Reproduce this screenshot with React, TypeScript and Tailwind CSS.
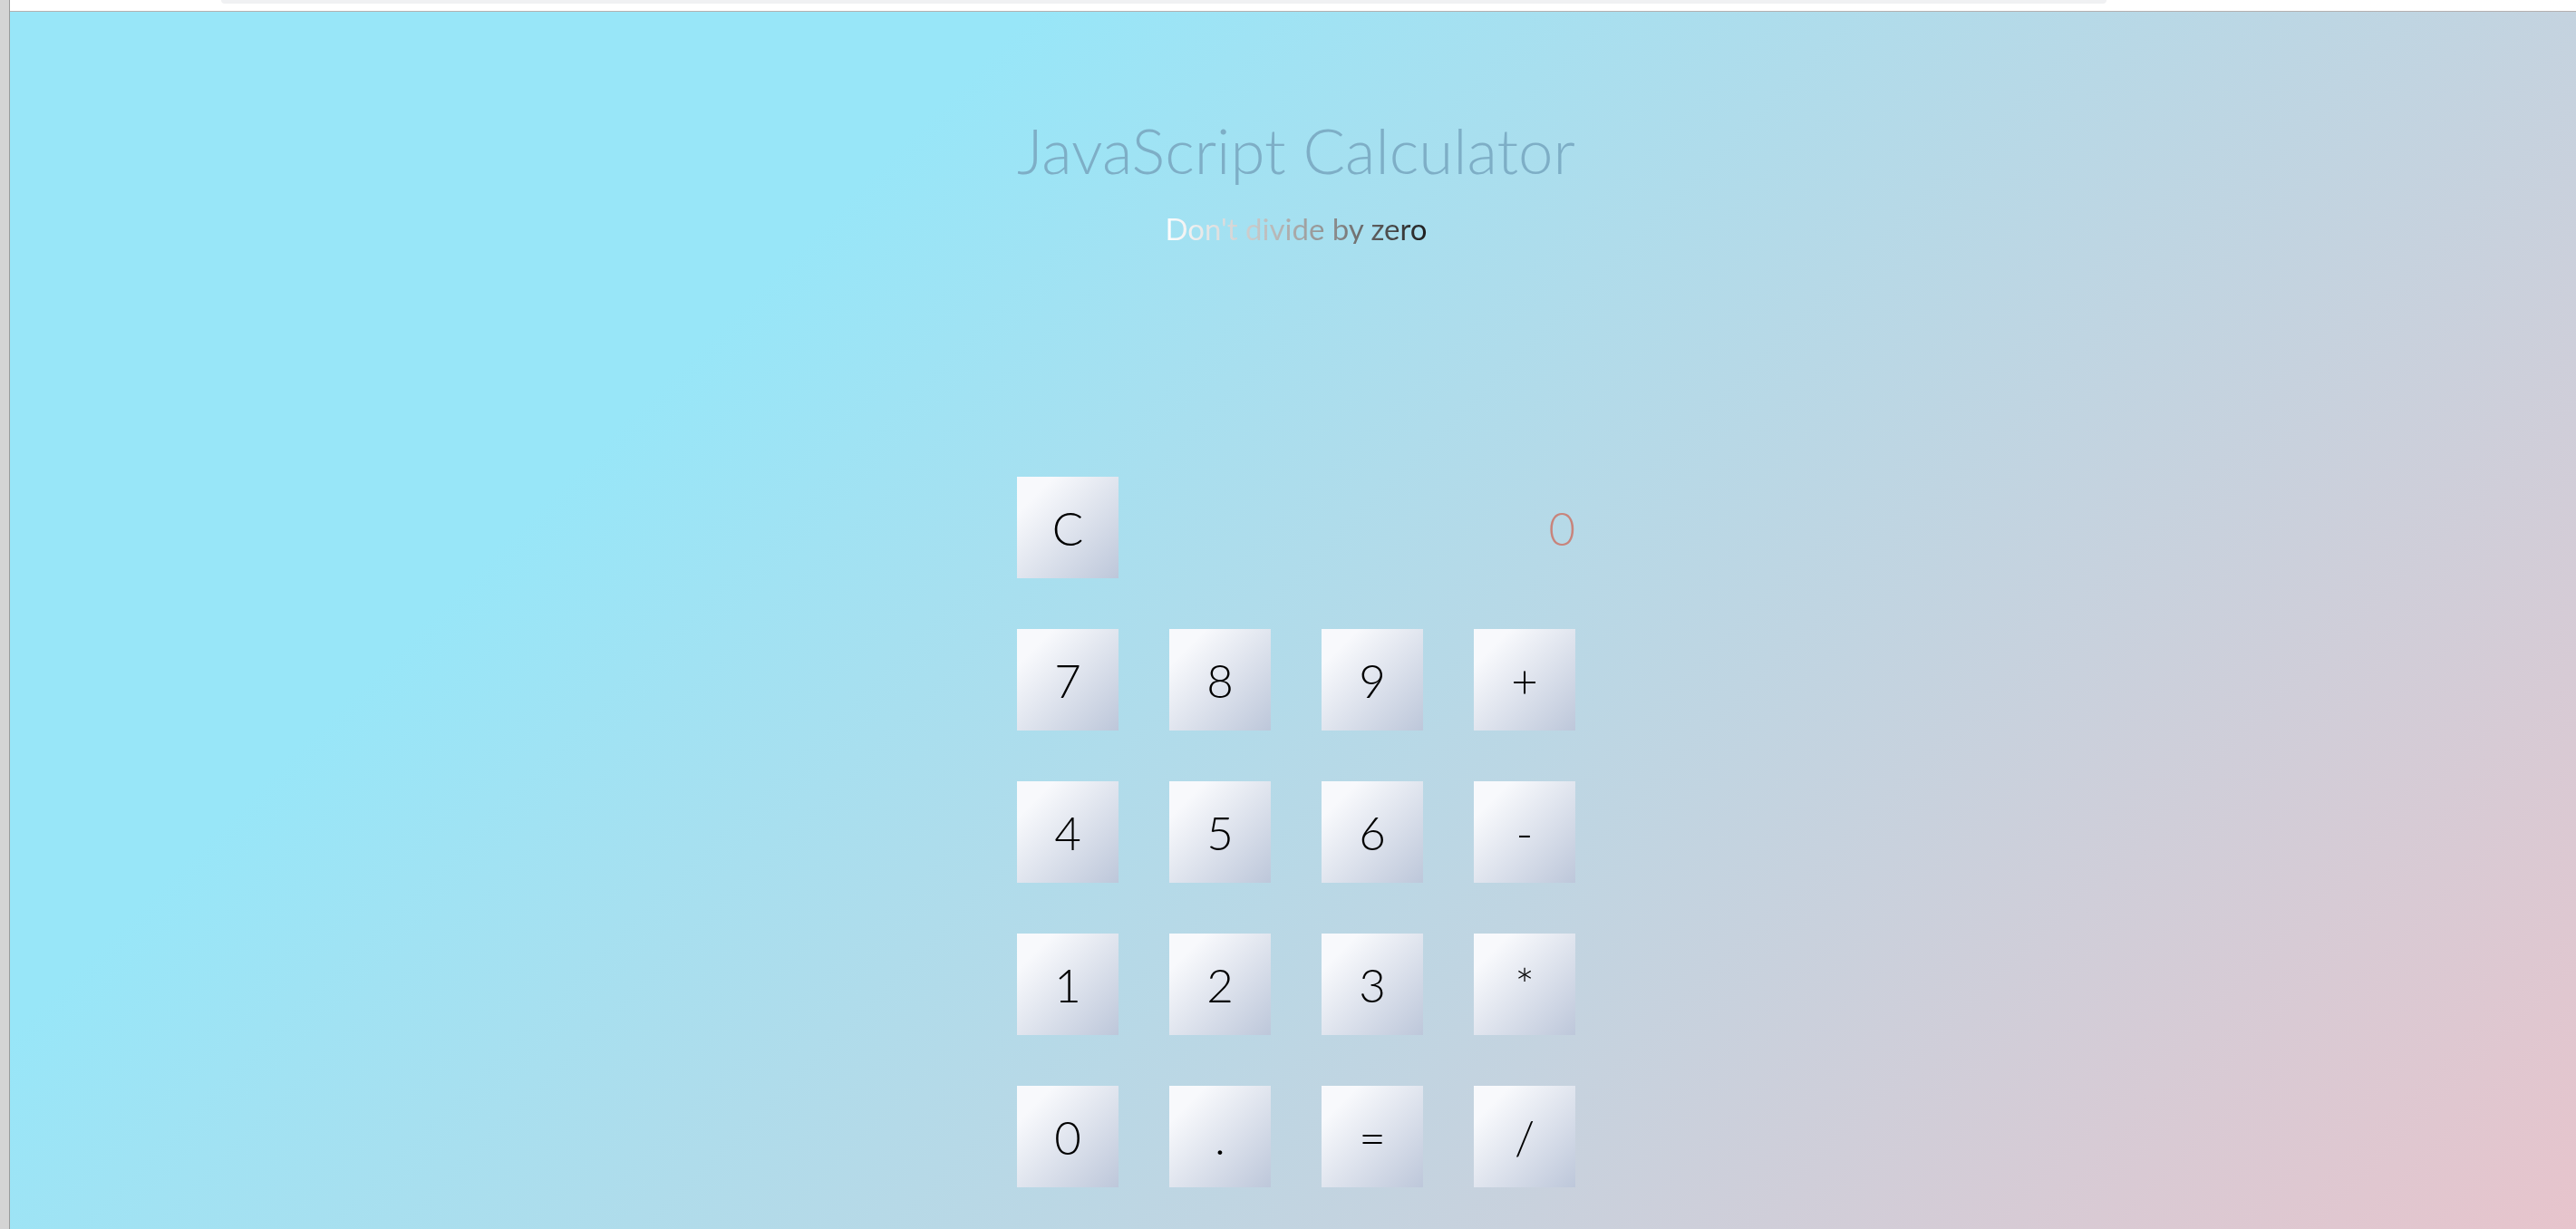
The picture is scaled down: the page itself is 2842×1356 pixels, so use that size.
import React from "react";

const keys: string[][] = [
  ["7", "8", "9", "+"],
  ["4", "5", "6", "-"],
  ["1", "2", "3", "*"],
  ["0", ".", "=", "/"],
];

function Key({ label }: { label: string }) {
  return (
    <button className="w-[112px] h-[112px] flex items-center justify-center bg-[linear-gradient(135deg,#f8f9fc_18%,#bdc7da_100%)] text-black text-[51px] font-light leading-none font-['Lato',sans-serif]">
      {label}
    </button>
  );
}

export default function App() {
  return (
    <div className="flex h-[1356px] w-full overflow-hidden">
      <div className="w-[11px] h-full bg-[#d4d4d4] border-r border-[#9a9a9a] shrink-0" />
      <div className="flex-1 flex flex-col">
        <div className="h-[13px] shrink-0 bg-white border-b border-[#b4b0b0] flex justify-start">
          <div className="ml-[233px] w-[2080px] h-[4px] bg-[#f0f1f3] rounded-b-[6px]" />
        </div>
        <main className="flex-1 flex flex-col items-center pl-[7px] bg-[linear-gradient(135deg,#98e6f8_27%,#e7c4cc_100%)] font-['Lato',sans-serif]">
          <h1 className="mt-[118px] text-[69px] leading-none font-light text-[#7eaec6]">
            JavaScript Calculator
          </h1>
          <p className="mt-[36px] text-[33px] leading-none bg-[linear-gradient(to_right,#ffffff_0%,#d0d0d0_30%,#8a8a8a_65%,#1e1e1e_100%)] bg-clip-text text-transparent">
            Don't divide by zero
          </p>
          <div className="mt-[257px] grid grid-cols-[repeat(4,112px)] gap-[56px]">
            <Key label="C" />
            <div className="col-span-3 flex items-center justify-end text-[51px] font-light leading-none text-[#c8847c]">
              0
            </div>
            {keys.flat().map((k) => (
              <Key key={k} label={k} />
            ))}
          </div>
        </main>
      </div>
    </div>
  );
}
